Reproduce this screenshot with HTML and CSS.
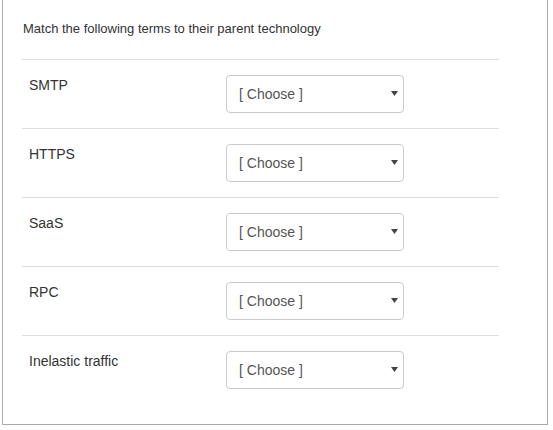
FILE: index.html
```html
<!DOCTYPE html>
<html>
<head>
<meta charset="utf-8">
<link rel="stylesheet" href="styles.css">
</head>
<body>
<div class="frame">
  <div class="content">
    <p class="title">Match the following terms to their parent technology</p>
    <div class="row">
      <div class="label">SMTP</div>
      <div class="select-wrap">
        <select class="select"><option>[ Choose ]</option></select>
        <svg class="arrow" width="7" height="5" viewBox="0 0 7 5"><path d="M0 0H7L3.5 5Z" fill="#444"/></svg>
      </div>
    </div>
    <div class="row">
      <div class="label">HTTPS</div>
      <div class="select-wrap">
        <select class="select"><option>[ Choose ]</option></select>
        <svg class="arrow" width="7" height="5" viewBox="0 0 7 5"><path d="M0 0H7L3.5 5Z" fill="#444"/></svg>
      </div>
    </div>
    <div class="row">
      <div class="label">SaaS</div>
      <div class="select-wrap">
        <select class="select"><option>[ Choose ]</option></select>
        <svg class="arrow" width="7" height="5" viewBox="0 0 7 5"><path d="M0 0H7L3.5 5Z" fill="#444"/></svg>
      </div>
    </div>
    <div class="row">
      <div class="label">RPC</div>
      <div class="select-wrap">
        <select class="select"><option>[ Choose ]</option></select>
        <svg class="arrow" width="7" height="5" viewBox="0 0 7 5"><path d="M0 0H7L3.5 5Z" fill="#444"/></svg>
      </div>
    </div>
    <div class="row">
      <div class="label">Inelastic traffic</div>
      <div class="select-wrap">
        <select class="select"><option>[ Choose ]</option></select>
        <svg class="arrow" width="7" height="5" viewBox="0 0 7 5"><path d="M0 0H7L3.5 5Z" fill="#444"/></svg>
      </div>
    </div>
  </div>
</div>
</body>
</html>
```
FILE: styles.css
```css
html, body {
  margin: 0;
  padding: 0;
  background: #fff;
}
body {
  font-family: "Liberation Sans", Arial, sans-serif;
  color: #333;
}
.frame {
  margin-left: 2px;
  width: 544px;
  height: 424px;
  border: 1px solid #a9a9a9;
  border-top: none;
}
.content {
  margin-left: 19px;
  width: 477px;
  padding-top: 20px;
}
.title {
  margin: 0;
  font-size: 13px;
  line-height: 18px;
  padding-left: 1px;
  height: 39px;
}
.row {
  display: flex;
  border-top: 1px solid #ddd;
  padding: 15px 0;
}
.label {
  width: 197px;
  padding-left: 7px;
  font-size: 14px;
  line-height: 20px;
}
.select-wrap {
  position: relative;
  width: 178px;
  height: 38px;
}
.select {
  appearance: none;
  -webkit-appearance: none;
  box-sizing: border-box;
  width: 178px;
  height: 38px;
  margin: 0;
  padding: 0 24px 0 12px;
  border: 1px solid #ccc;
  border-radius: 4px;
  background: #fff;
  font-family: "Liberation Sans", Arial, sans-serif;
  font-size: 14px;
  color: #555;
  outline: none;
}
.arrow {
  position: absolute;
  right: 6px;
  top: 16px;
}
```
